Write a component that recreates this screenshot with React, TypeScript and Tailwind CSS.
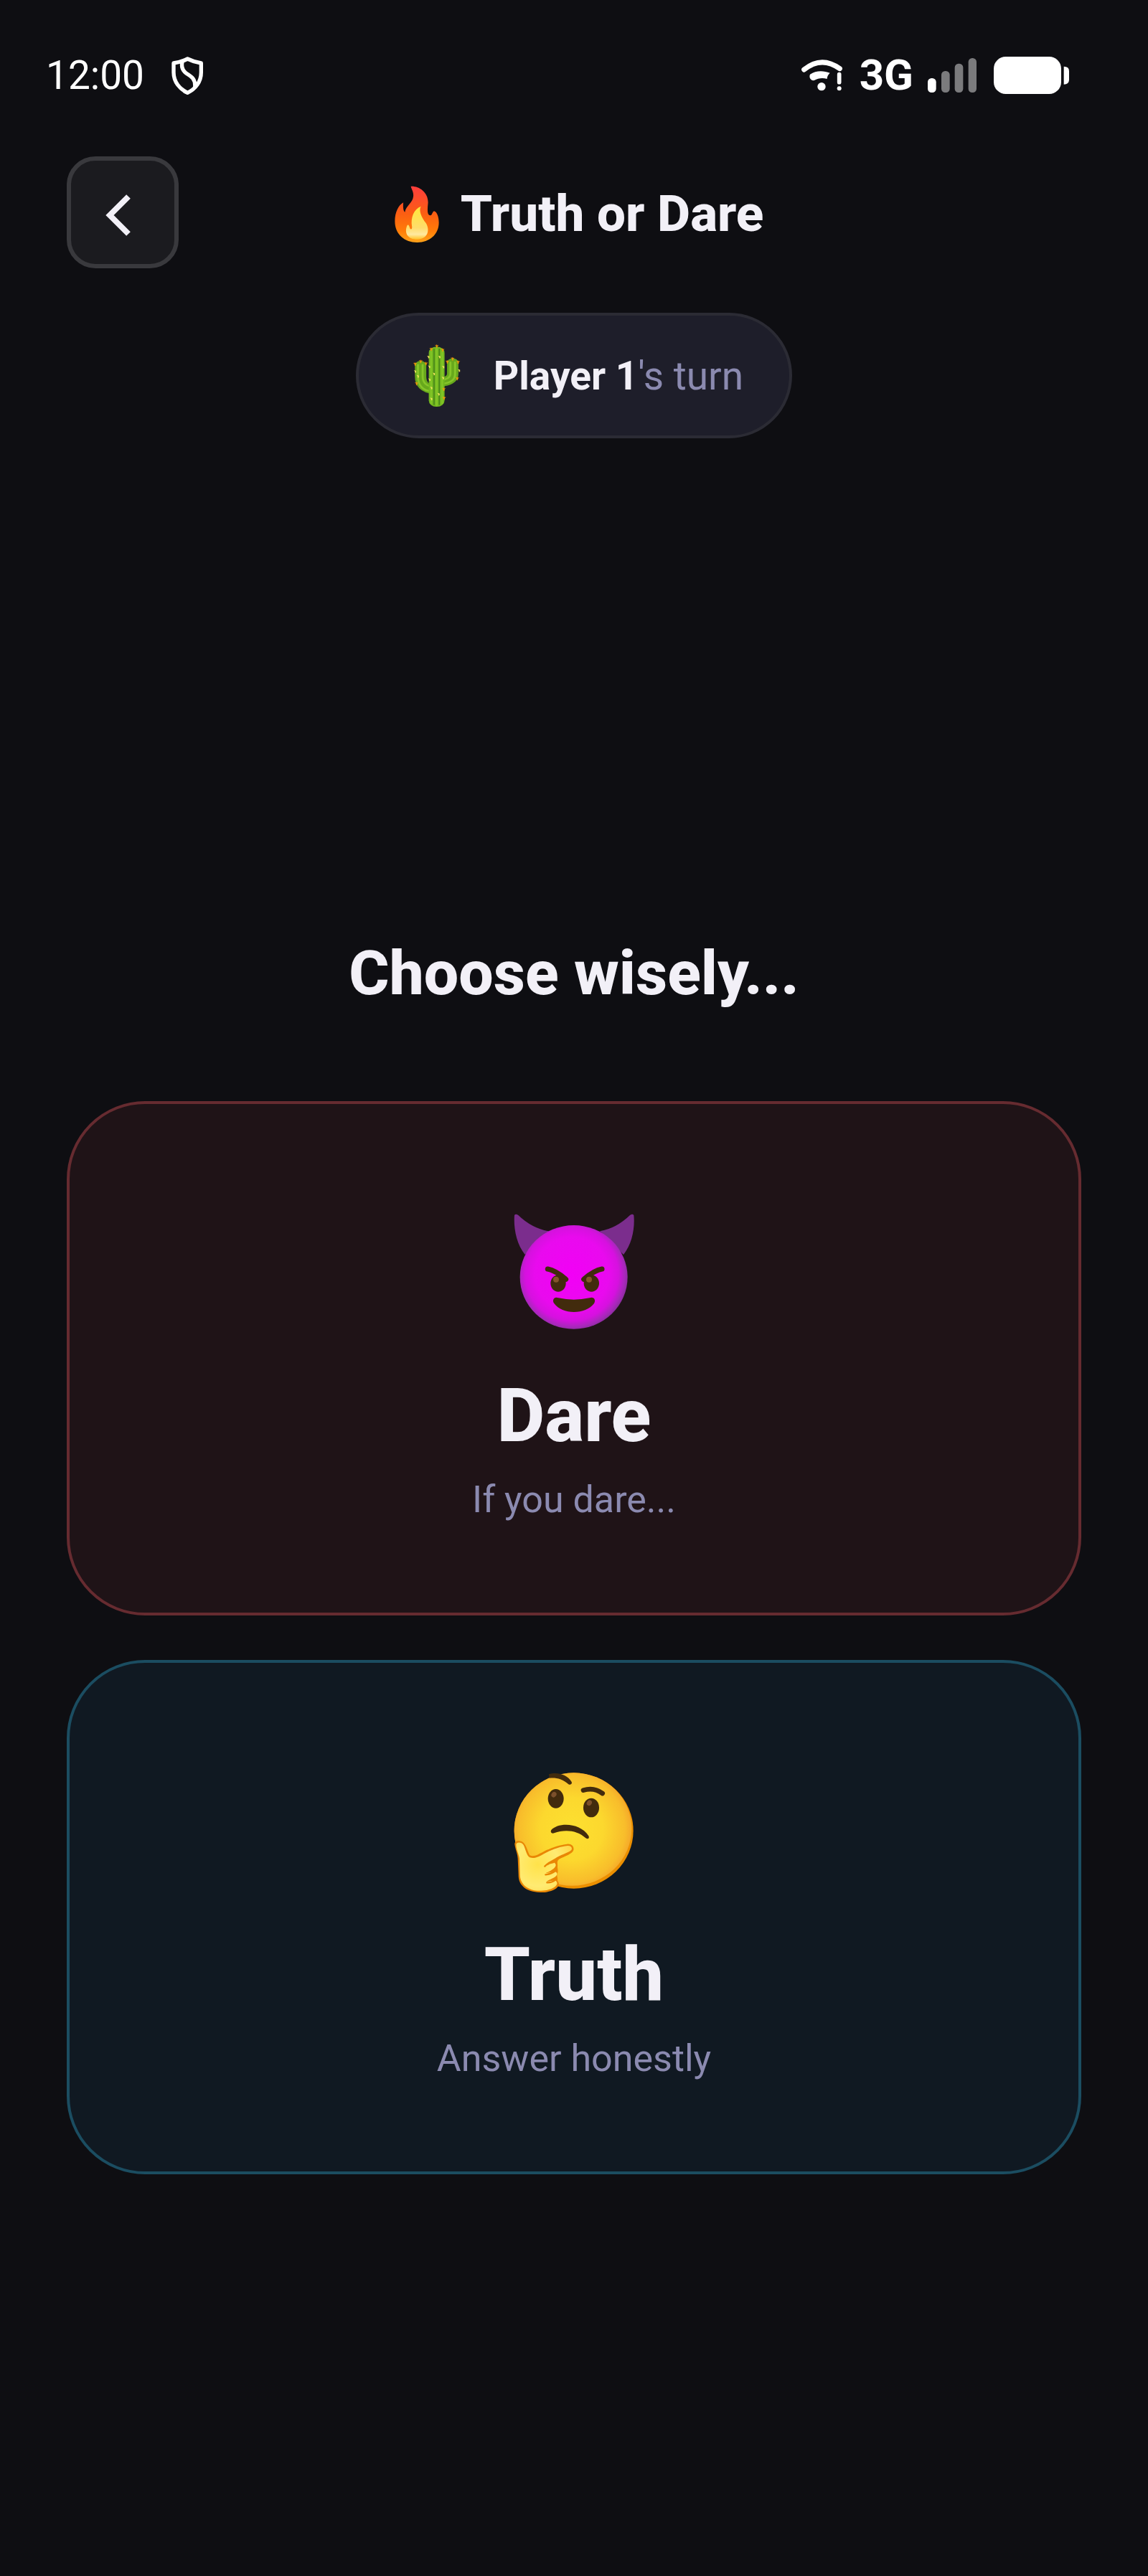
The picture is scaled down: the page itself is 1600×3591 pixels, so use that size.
const ShieldIcon = () => (
    <svg className="w-[44px] h-[53px]" viewBox="597 86 132 159" fill="none" stroke="#fff" strokeWidth="16" strokeLinejoin="round" aria-hidden="true">
        <path d="M664 95 C646 104 626 110 606 113 V152 C606 192 632 222 664 237 C696 222 721 192 721 152 V113 C701 110 682 104 664 95 Z" />
        <path d="M643 105 C636 128 642 142 658 155 C682 170 698 180 695 214" />
    </svg>
);

const WifiIcon = () => (
    <svg className="w-[57px] h-[44px]" viewBox="84 91 171 132" fill="none" stroke="#fff" strokeLinecap="round" aria-hidden="true">
        <path d="M95 133 Q168 74 244 129" strokeWidth="21" />
        <path d="M120 153 C144 136 176 136 203 147 C195 154 191 164 191 172 C172 166 153 169 138 178 C124 181 114 166 120 153 Z" fill="#fff" stroke="none" />
        <circle cx="168" cy="204" r="17" fill="#fff" stroke="none" />
        <path d="M242 153 V186" strokeWidth="17" />
        <circle cx="242" cy="212" r="9" fill="#fff" stroke="none" />
    </svg>
);

const SignalIcon = () => (
    <svg className="w-[68px] h-[48px]" viewBox="612 93 204 144" aria-hidden="true">
        <rect x="612" y="177" width="35" height="60" rx="16" fill="#fff" />
        <rect x="669" y="147" width="35" height="90" rx="16" fill="#7b7b7d" />
        <rect x="725" y="116" width="35" height="121" rx="16" fill="#7b7b7d" />
        <rect x="782" y="93" width="34" height="144" rx="16" fill="#7b7b7d" />
    </svg>
);

const BatteryIcon = () => (
    <svg className="w-[105px] h-[52px]" viewBox="884 87 315 156" fill="#fff" aria-hidden="true">
        <rect x="884" y="87" width="282" height="156" rx="50" />
        <path d="M1177 128 Q1199 128 1199 147 V184 Q1199 203 1177 203 Z" />
    </svg>
);

const FireEmoji = () => (
    <svg className="w-[62px] h-[79px]" viewBox="76 86 169 237" preserveAspectRatio="none" aria-hidden="true">
        <defs>
            <linearGradient id="fireOuter" x1="0" y1="0" x2="0" y2="1">
                <stop offset="0" stopColor="#ff3d3d" />
                <stop offset="0.5" stopColor="#fb5f12" />
                <stop offset="0.8" stopColor="#ff7d08" />
                <stop offset="1" stopColor="#ffa31a" />
            </linearGradient>
            <linearGradient id="fireInner" x1="0" y1="0" x2="0" y2="1">
                <stop offset="0" stopColor="#ffe838" />
                <stop offset="0.65" stopColor="#ffdc6b" />
                <stop offset="0.85" stopColor="#ffe9a0" />
                <stop offset="1" stopColor="#ffc32a" />
            </linearGradient>
        </defs>
        <path d="M138 88 C168 86 204 112 203 157 C201 179 198 209 211 210 C219 211 219 195 226 192 C237 195 244 216 244 240 C244 290 208 323 162 323 C114 323 77 290 77 234 C77 196 91 167 109 156 C107 177 110 194 115 196 C119 168 145 158 147 130 C149 108 138 98 138 88 Z" fill="url(#fireOuter)" />
        <path d="M176 172 C166 190 179 219 195 242 C211 270 203 309 162 310 C126 310 112 284 123 253 C127 245 131 250 134 263 C137 270 143 270 142 257 C136 218 149 184 176 172 Z" fill="url(#fireInner)" />
    </svg>
);

const spines = [
    [316, 191], [297, 204], [336, 207], [261, 255], [242, 266], [279, 264], [370, 244],
    [352, 257], [389, 258], [247, 348], [386, 327], [340, 372], [341, 409],
];
const paleSpines = [
    [287, 237], [325, 237], [290, 278], [338, 279], [306, 308], [291, 332], [337, 325],
    [242, 298], [251, 318], [392, 294], [297, 367], [322, 393], [297, 413],
];

const CactusEmoji = () => (
    <svg className="w-[66px] h-[87px]" viewBox="236 184 162 262" preserveAspectRatio="none" fill="none" aria-hidden="true">
        <path d="M261 273 V318 C261 352 276 370 306 373 M371 262 V308 C371 330 354 340 330 341" stroke="#67a81c" strokeWidth="39" strokeLinecap="round" />
        <path d="M252 270 V318 C252 358 270 380 300 381 M268 270 V318 C268 346 282 361 306 362 M363 260 V306 C363 323 350 333 333 333 M379 260 V308 C379 335 360 348 335 349" stroke="#86c529" strokeWidth="7" strokeLinecap="round" />
        <rect x="289" y="194" width="54" height="252" rx="26" fill="#72b61f" />
        <path d="M307 204 V437 M325 204 V437" stroke="#47841a" strokeWidth="4" strokeLinecap="round" />
        <path d="M297 214 V432 M316 202 V440 M335 214 V432" stroke="#82c526" strokeWidth="6" strokeLinecap="round" />
        {spines.map(([x, y]) => (
            <path key={`${x}-${y}`} d={`M${x - 5} ${y - 4}l4 2 1 -4 2 4 4 -1 -4 5 v5 h-3 v-5z`} fill="#f59a0c" stroke="#f59a0c" strokeWidth="1" />
        ))}
        {paleSpines.map(([x, y]) => (
            <path key={`${x}-${y}`} d={`M${x - 4} ${y - 5}l8 2 v8 l-4 1 v-5z`} fill="#f2e35c" />
        ))}
    </svg>
);

const DevilEmoji = () => (
    <svg className="w-[168px] h-[161px]" viewBox="75 63 504 483" aria-hidden="true">
        <defs>
            <radialGradient id="devilFace" gradientUnits="userSpaceOnUse" cx="318" cy="315" r="238">
                <stop offset="0" stopColor="#f200f6" />
                <stop offset="0.65" stopColor="#e90aee" />
                <stop offset="0.82" stopColor="#d611df" />
                <stop offset="0.93" stopColor="#a828bb" />
                <stop offset="1" stopColor="#8a2d9d" />
            </radialGradient>
        </defs>
        <path d="M78 69 Q83 62 94 69 Q151 124 222 136 L122 234 C85 187 74 121 78 69 Z M577 69 Q572 62 561 69 Q504 124 435 136 L534 234 C571 187 582 121 577 69 Z" fill="#7b2d8d" />
        <ellipse cx="326" cy="328" rx="225" ry="217" fill="url(#devilFace)" />
        <path d="M217 294 Q252 301 293 337 M444 294 Q409 301 368 337" fill="none" stroke="#422b0d" strokeWidth="21" strokeLinecap="round" />
        <ellipse cx="261" cy="354" rx="32" ry="35" fill="#422b0d" />
        <ellipse cx="400" cy="354" rx="32" ry="35" fill="#422b0d" />
        <circle cx="252" cy="338" r="12" fill="#85552b" />
        <circle cx="390" cy="338" r="12" fill="#85552b" />
        <path d="M262 415 Q326 429 392 415 C410 408 420 424 411 438 C376 485 278 486 244 438 C234 424 244 407 262 415 Z" fill="#422b0d" />
    </svg>
);

const ThinkingEmoji = () => (
    <svg className="w-[168px] h-[168px]" viewBox="75 60 504 504" aria-hidden="true">
        <defs>
            <radialGradient id="thinkFace" gradientUnits="userSpaceOnUse" cx="318" cy="295" r="262">
                <stop offset="0" stopColor="#fde030" />
                <stop offset="0.5" stopColor="#fcd82e" />
                <stop offset="0.85" stopColor="#f8bd2b" />
                <stop offset="1" stopColor="#f3a02a" />
            </radialGradient>
            <radialGradient id="thinkHand" gradientUnits="userSpaceOnUse" cx="175" cy="445" r="150">
                <stop offset="0" stopColor="#ffe24a" />
                <stop offset="0.6" stopColor="#ffeb72" />
                <stop offset="1" stopColor="#ffd94b" />
            </radialGradient>
            <clipPath id="thinkClip">
                <ellipse cx="326" cy="303" rx="249" ry="242" />
            </clipPath>
        </defs>
        <ellipse cx="326" cy="303" rx="249" ry="242" fill="#eb8f00" />
        <ellipse cx="319" cy="295" rx="249" ry="238" fill="url(#thinkFace)" clipPath="url(#thinkClip)" />
        <path d="M222 67 C254 56 299 67 317 99 C321 109 310 114 303 108 C280 86 251 80 224 83 Z" fill="#422b0d" />
        <path d="M366 134 Q410 120 446 147" fill="none" stroke="#422b0d" strokeWidth="20" strokeLinecap="round" />
        <ellipse cx="251" cy="169" rx="33" ry="40" fill="#422b0d" />
        <ellipse cx="399" cy="207" rx="33" ry="40" fill="#422b0d" />
        <ellipse cx="243" cy="152" rx="10" ry="12" fill="#7c502b" transform="rotate(35 243 152)" />
        <ellipse cx="391" cy="187" rx="10" ry="12" fill="#7c502b" transform="rotate(35 391 187)" />
        <path d="M232 300 C262 267 353 269 388 325 C393 335 385 341 376 334 C340 300 287 297 244 313 C233 317 227 308 232 300 Z" fill="#422b0d" />
        <path d="M79 360 C78 345 96 342 110 349 C127 358 133 392 142 406 C160 414 178 401 197 392 C224 377 264 363 298 359 C318 357 328 370 325 384 C321 400 287 411 267 421 C252 431 260 440 258 454 C258 466 262 470 257 483 C254 494 260 498 258 511 C258 516 265 519 264 529 C258 550 223 563 184 561 C127 559 94 532 95 488 L92 419 C91 399 82 382 79 360 Z" fill="#e98705" />
        <path d="M85 362 C86 349 108 350 116 363 C126 384 128 405 142 415 C164 423 185 408 204 398 C232 383 271 369 300 366 C316 365 322 377 315 385 C302 397 267 405 248 419 C231 429 216 434 204 450 C220 444 233 434 245 437 C261 449 242 466 209 480 C231 480 249 469 255 480 C261 494 238 501 212 515 C232 516 247 507 253 515 C266 529 240 553 190 554 C136 556 103 529 101 488 L99 420 C97 401 86 386 85 362 Z" fill="url(#thinkHand)" />
        <path d="M205 452 Q219 438 241 435 M208 487 Q231 485 249 471 M214 520 Q237 521 251 507" fill="none" stroke="#e98705" strokeWidth="7" strokeLinecap="round" />
    </svg>
);

const choices = [
    {
        icon: DevilEmoji,
        title: "Dare",
        description: "If you dare...",
        color: "bg-[#1f1317] border-[#662b30]"
    },
    {
        icon: ThinkingEmoji,
        title: "Truth",
        description: "Answer honestly",
        color: "bg-[#101922] border-[#1b4d61]"
    }
];

const StatusBar = () => (
    <div className="flex h-[210px] items-center justify-between pl-16 pr-[110px] text-white">
        <div className="flex items-center gap-[38px]">
            <span className="text-[55px] leading-none">12:00</span>
            <ShieldIcon />
        </div>
        <div className="flex items-center">
            <WifiIcon />
            <span className="ml-6 mr-5 text-[60px] font-bold leading-none">3G</span>
            <SignalIcon />
            <div className="ml-6">
                <BatteryIcon />
            </div>
        </div>
    </div>
);

const App = () => {
    return (
        <div className="flex min-h-screen flex-col bg-[#0e0e12] font-[Roboto,sans-serif] text-[#f2f0f7]">
            <StatusBar />

            {/* header */}
            <header className="mt-2 grid grid-cols-[156px_1fr_156px] items-center px-[93px]">
                <button type="button" aria-label="Back" className="flex h-[156px] w-[156px] items-center justify-center rounded-[40px] border-6 border-[#39393d] bg-[#1b1b1f]">
                    <svg className="mr-3 mt-2 h-[60px] w-[36px]" viewBox="0 0 36 60" fill="none" stroke="currentColor" strokeWidth="8" aria-hidden="true">
                        <path d="M32 4 L6 30 L32 56" />
                    </svg>
                </button>
                <h1 className="flex items-center justify-center gap-4 pt-1 text-[71px] font-extrabold leading-[84px]">
                    <span className="flex w-[90px] justify-center">
                        <FireEmoji />
                    </span>
                    Truth or Dare
                </h1>
            </header>

            {/* current player */}
            <div className="mt-[62px] flex h-[175px] items-center gap-[34px] self-center rounded-full border-4 border-[#2b2b34] bg-[#1e1e2a] px-16">
                <span className="flex w-[90px] justify-center">
                    <CactusEmoji />
                </span>
                <p className="text-[55px] leading-[64px] text-[#8b8ab0]">
                    <span className="font-bold text-[#f2f0f7]">Player 1</span>'s turn
                </p>
            </div>

            {/* choices */}
            <main className="flex flex-1 flex-col justify-center px-[93px] pt-[133px]">
                <h2 className="mb-[126px] text-center text-[86px] font-extrabold leading-[104px]">Choose wisely...</h2>
                <div className="flex flex-col gap-[62px]">
                    {choices.map((item) => (
                        <button type="button" key={item.title} className={`flex flex-col items-center rounded-[109px] border-4 pb-[125px] pt-[153px] ${item.color}`}>
                            <span className="flex h-[168px] items-start">
                                <item.icon />
                            </span>
                            <span className="mt-[54px] text-[103px] font-extrabold leading-[120px]">{item.title}</span>
                            <span className="mt-[25px] text-[52px] leading-[64px] text-[#8b8ab0]">{item.description}</span>
                        </button>
                    ))}
                </div>
            </main>
        </div>
    );
}

export default App;
